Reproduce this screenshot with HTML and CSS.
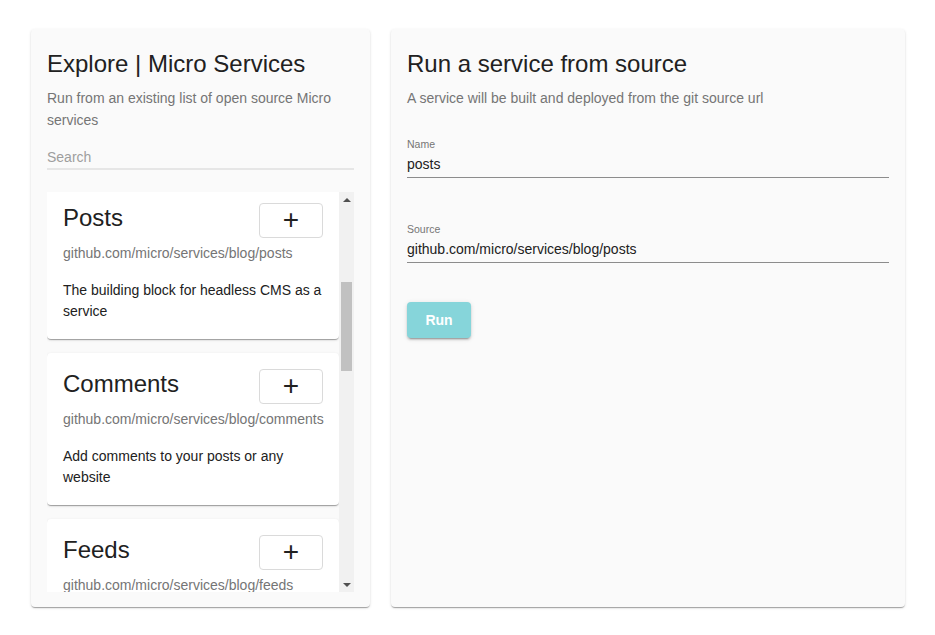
FILE: index.html
```html
<!DOCTYPE html>
<html>
<head>
<meta charset="utf-8">
<link rel="stylesheet" href="styles.css">
</head>
<body>
<div class="page">
  <section class="panel explore">
    <h1 class="panel-title">Explore | Micro Services</h1>
    <p class="panel-sub">Run from an existing list of open source Micro services</p>
    <input class="search" type="text" placeholder="Search">
    <div class="list-wrap">
      <div class="list">
        <div class="svc">
          <div class="svc-head"><h2 class="svc-name">Posts</h2><button class="add">+</button></div>
          <div class="svc-url">github.com/micro/services/blog/posts</div>
          <p class="svc-desc">The building block for headless CMS as a service</p>
        </div>
        <div class="svc">
          <div class="svc-head"><h2 class="svc-name">Comments</h2><button class="add">+</button></div>
          <div class="svc-url">github.com/micro/services/blog/comments</div>
          <p class="svc-desc">Add comments to your posts or any website</p>
        </div>
        <div class="svc">
          <div class="svc-head"><h2 class="svc-name">Feeds</h2><button class="add">+</button></div>
          <div class="svc-url">github.com/micro/services/blog/feeds</div>
          <p class="svc-desc">Import RSS feeds and turn them into posts</p>
        </div>
      </div>
      <div class="scrollbar" aria-hidden="true">
        <span class="sb-btn"><span class="tri up"></span></span>
        <span class="sb-thumb"></span>
        <span class="sb-btn end"><span class="tri down"></span></span>
      </div>
    </div>
  </section>
  <section class="panel run">
    <h1 class="panel-title">Run a service from source</h1>
    <p class="panel-sub">A service will be built and deployed from the git source url</p>
    <label class="field">
      <span class="field-label">Name</span>
      <input class="field-input" type="text" value="posts">
    </label>
    <label class="field">
      <span class="field-label">Source</span>
      <input class="field-input" type="text" value="github.com/micro/services/blog/posts">
    </label>
    <div class="actions"><button class="run-btn">Run</button></div>
  </section>
</div>
</body>
</html>
```

FILE: styles.css
```css
* { box-sizing: border-box; }
html, body { margin: 0; height: 100%; background: #fff; }
body { font-family: "Liberation Sans", Arial, sans-serif; color: #212121; }
.page {
  display: flex;
  gap: 21px;
  height: 100vh;
  padding: 29px 30px 28px 31px;
}
.panel {
  background: #fafafa;
  border-radius: 4px;
  box-shadow: 0 2px 1px -1px rgba(0,0,0,.2), 0 1px 1px 0 rgba(0,0,0,.14), 0 1px 3px 0 rgba(0,0,0,.12);
  padding: 16px 16px 15px;
  display: flex;
  flex-direction: column;
  min-height: 0;
  min-width: 0;
}
.explore { flex: 0 0 339px; width: 339px; }
.run { flex: 1; }
.panel-title {
  margin: 0;
  font-size: 24px;
  font-weight: 400;
  line-height: 38px;
  color: #212121;
}
.panel-sub {
  margin: 4px 0 0;
  font-size: 14px;
  line-height: 22px;
  color: #757575;
}
.search {
  margin-top: 16px;
  border: 0;
  border-bottom: 2px solid #e6e6e6;
  background: transparent;
  font: 14px "Liberation Sans", Arial, sans-serif;
  padding: 2px 0 3px;
  outline: none;
  min-width: 0;
}
.search::placeholder { color: #9e9e9e; }
.list-wrap {
  margin-top: 22px;
  flex: 1;
  min-height: 0;
  min-width: 0;
  display: flex;
}
.list {
  flex: 1;
  min-width: 0;
  overflow: hidden;
  display: flex;
  flex-direction: column;
  gap: 14px;
}
.svc {
  flex: none;
  background: #fff;
  border-radius: 4px;
  box-shadow: 0 2px 1px -1px rgba(0,0,0,.2), 0 1px 1px 0 rgba(0,0,0,.14), 0 1px 3px 0 rgba(0,0,0,.12);
  padding: 16px 16px 17px;
}
.svc:first-child { margin-top: -5px; }
.svc-head {
  display: flex;
  justify-content: space-between;
  align-items: flex-start;
}
.svc-name {
  margin: 0;
  font-size: 24px;
  font-weight: 400;
  line-height: 30px;
  color: #212121;
}
.add {
  flex: none;
  width: 64px;
  height: 35px;
  background: #fff;
  border: 1px solid #dadada;
  border-radius: 4px;
  font: 28px/1 "Liberation Sans", Arial, sans-serif;
  color: #212121;
  padding: 0 0 2px;
}
.svc-url {
  margin-top: 5px;
  font-size: 14px;
  line-height: 20px;
  color: #757575;
  white-space: nowrap;
}
.svc-desc {
  margin: 17px 0 0;
  font-size: 14px;
  line-height: 21px;
  color: #212121;
}
.scrollbar {
  flex: 0 0 15px;
  background: #f1f1f1;
  display: flex;
  flex-direction: column;
}
.sb-btn {
  height: 15px;
  display: flex;
  align-items: center;
  justify-content: center;
}
.sb-btn.end { margin-top: auto; }
.tri {
  width: 0;
  height: 0;
  border-left: 4px solid transparent;
  border-right: 4px solid transparent;
}
.tri.up { border-bottom: 4px solid #505050; }
.tri.down { border-top: 4px solid #505050; }
.sb-thumb {
  margin: 75px 2px 0;
  height: 89px;
  background: #c1c1c1;
}
.field {
  display: flex;
  flex-direction: column;
  margin-top: 28px;
}
.field + .field { margin-top: 44px; }
.field-label {
  font-size: 10.5px;
  line-height: 14px;
  color: #757575;
}
.field-input {
  border: 0;
  border-bottom: 1px solid #8c8c8c;
  background: transparent;
  font: 14px "Liberation Sans", Arial, sans-serif;
  color: #212121;
  padding: 5px 0 5px;
  outline: none;
}
.actions { margin-top: 39px; }
.run-btn {
  width: 64px;
  height: 36px;
  border: 0;
  border-radius: 4px;
  background: #86d5da;
  color: #fff;
  font: bold 14px "Liberation Sans", Arial, sans-serif;
  box-shadow: 0 3px 1px -2px rgba(0,0,0,.2), 0 2px 2px 0 rgba(0,0,0,.14), 0 1px 5px 0 rgba(0,0,0,.12);
}
```
